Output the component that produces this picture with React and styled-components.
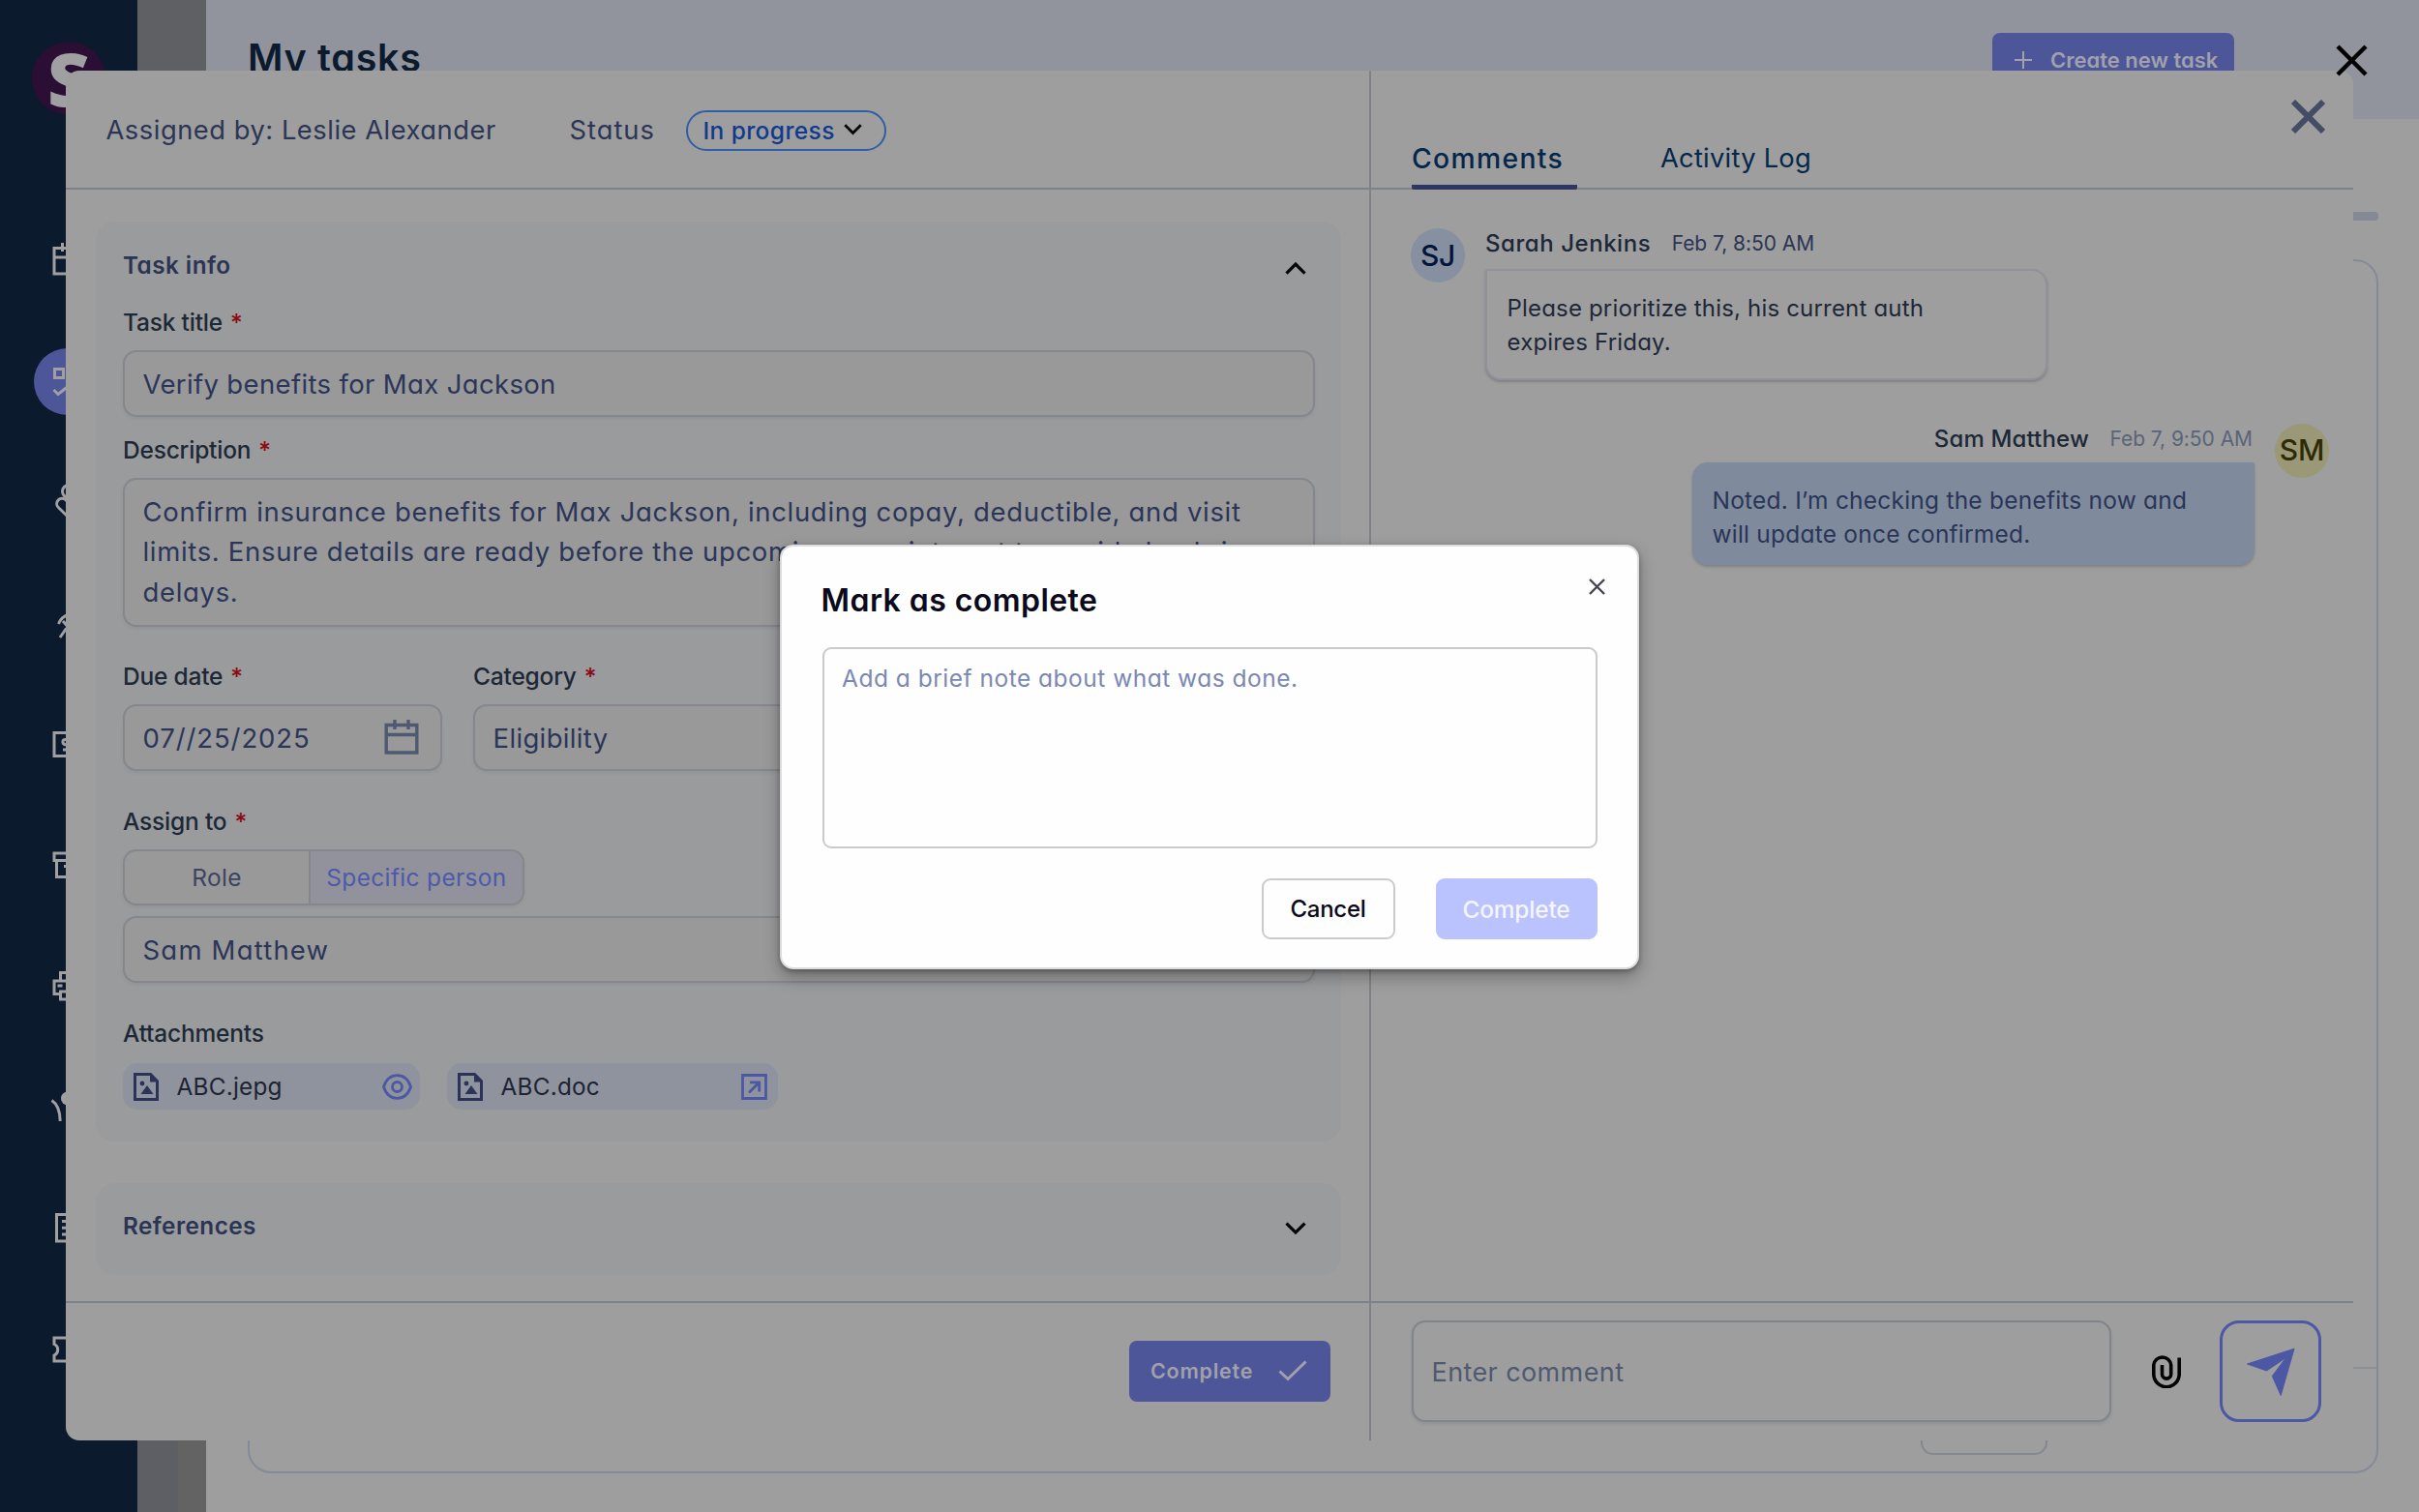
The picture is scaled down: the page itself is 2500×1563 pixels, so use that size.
import React from 'react';
import styled, { createGlobalStyle, css } from 'styled-components';

const GlobalStyle = createGlobalStyle`
  *, *::before, *::after { box-sizing: border-box; }
  html, body { margin: 0; padding: 0; }
  body {
    width: 2500px;
    height: 1563px;
    overflow: hidden;
    background: #9e9e9e;
    font-family: Inter, 'Liberation Sans', sans-serif;
  }
  button { font-family: inherit; margin: 0; padding: 0; cursor: pointer; }
  svg { display: block; flex: none; }
`;

/* Geometric text: single-storey "a", slightly open tracking. */
const geometric = css`
  font-feature-settings: 'cv11';
`;

/* ---------- page behind the panel ---------- */

const Screen = styled.div`
  position: relative;
  display: flex;
  width: 2500px;
  height: 1563px;
  overflow: hidden;
`;

const Sidebar = styled.nav`
  display: flex;
  flex-direction: column;
  align-items: center;
  width: 142px;
  background: #0b1a2c;
`;

const LogoArea = styled.div`
  height: 205.4px;
  padding-top: 43px;
`;

const Logo = styled.div`
  display: flex;
  align-items: center;
  justify-content: center;
  width: 76px;
  height: 76px;
  border-radius: 50%;
  background: #2b0e33;
  color: #a0a0a2;
  font: 800 76px/76px 'Open Sans', sans-serif;
`;

const NavSlot = styled.a`
  display: flex;
  align-items: center;
  justify-content: center;
  height: 125.2px;
  color: #a0a0a2;
`;

const NavBubble = styled.span`
  display: flex;
  align-items: center;
  justify-content: center;
  width: 69px;
  height: 69px;
  margin: ${(p) => (p.$active ? '2px 3px 0 0' : 0)};
  border-radius: 50%;
  background: ${(p) => (p.$active ? '#4d5698' : 'transparent')};
  svg { margin-left: ${(p) => (p.$active ? '3px' : 0)}; }
`;

const Gutter = styled.div`
  display: flex;
  flex-direction: column;
  width: 71px;
  background: #5f6063;
`;

const GutterFoot = styled.div`
  display: grid;
  grid-template-columns: 42px 29px;
  height: 130px;
  margin-top: auto;
`;

const GutterShade = styled.div`
  background: ${(p) => p.$tone};
`;

const Page = styled.main`
  display: flex;
  flex-direction: column;
  flex: 1;
  background: #9e9e9e;
`;

const PageHeader = styled.header`
  display: flex;
  align-items: center;
  justify-content: space-between;
  height: 123px;
  padding: 0 191px 0 43px;
  background: #91949d;
`;

const PageTitle = styled.h1`
  margin: 0 0 3px;
  color: #0b1a2c;
  font-size: 39.5px;
  font-weight: 600;
  letter-spacing: 0.7px;
  ${geometric}
`;

const CreateButton = styled.button`
  display: flex;
  align-items: center;
  gap: 19px;
  width: 250px;
  height: 56px;
  padding-left: 23px;
  border: 0;
  border-radius: 8px;
  background: #4d5698;
  color: #a1a1ac;
  font-size: 22px;
  font-weight: 600;
  white-space: nowrap;
  ${geometric}
`;

const PageBody = styled.div`
  display: flex;
  flex-direction: column;
  align-items: flex-end;
  padding: 96px 42px 0 43px;
`;

const Rail = styled.div`
  width: 160px;
  height: 9px;
  border-radius: 4px;
  background: #858994;
`;

const TableCard = styled.section`
  display: flex;
  flex-direction: column;
  justify-content: flex-end;
  width: 100%;
  height: 1255px;
  margin-top: 40px;
  border: 2px solid #858a98;
  border-radius: 24px;
`;

const Pager = styled.div`
  display: flex;
  justify-content: flex-end;
  height: 108px;
  padding: 24px 340px 0 0;
  border-top: 2px solid #8c9197;
`;

const PagerSelect = styled.div`
  width: 131px;
  height: 65px;
  border: 2px solid #84898f;
  border-radius: 13px;
`;

/* ---------- task panel ---------- */

const Panel = styled.section`
  position: absolute;
  top: 73px;
  left: 68px;
  display: grid;
  grid-template-columns: 1347px 1fr;
  width: 2364px;
  height: 1416px;
  border-radius: 14px 14px 0 14px;
  background: #9e9e9e;
  overflow: hidden;
`;

const Column = styled.div`
  display: flex;
  flex-direction: column;
  min-width: 0;
  border-left: ${(p) => (p.$divided ? '2px solid #7f8286' : 0)};
`;

const ColumnHeader = styled.header`
  display: flex;
  flex: none;
  height: 123px;
  border-bottom: 2px solid #7d8188;
`;

const TaskHeader = styled(ColumnHeader)`
  align-items: center;
  padding: 1px 0 0 41.5px;
`;

const HeaderText = styled.span`
  width: ${(p) => p.$width};
  color: #2c3556;
  font-size: 27.3px;
  letter-spacing: ${(p) => p.$track};
  white-space: nowrap;
  ${geometric}
`;

const StatusPill = styled.button`
  display: flex;
  align-items: center;
  gap: 9px;
  width: 207px;
  height: 42px;
  margin-top: 1px;
  padding-left: 16px;
  border: 2px solid #2f5da6;
  border-radius: 21px;
  background: transparent;
  color: #103a8e;
  font-size: 24.5px;
  font-weight: 500;
  letter-spacing: 0.4px;
  white-space: nowrap;
  ${geometric}
`;

const ColumnBody = styled.div`
  display: flex;
  flex: 1;
  flex-direction: column;
  gap: ${(p) => p.$gap};
  padding: ${(p) => p.$pad};
`;

const ColumnFooter = styled.footer`
  display: flex;
  flex: none;
  align-items: center;
  height: 144px;
  padding-bottom: 1px;
  border-top: 2px solid #7a828a;
`;

const TaskFooter = styled(ColumnFooter)`
  justify-content: flex-end;
  padding-right: 40px;
`;

const CompleteButton = styled.button`
  display: flex;
  align-items: center;
  justify-content: space-between;
  width: 208px;
  height: 63px;
  padding: 0 24px 2px 22px;
  border: 0;
  border-radius: 8px;
  background: #4d5698;
  color: #a1a1ac;
  font-size: 21.5px;
  font-weight: 600;
  letter-spacing: 0.75px;
  ${geometric}
`;

const Section = styled.section`
  height: ${(p) => p.$height};
  padding: ${(p) => p.$padTop} 27px 0 28px;
  border-radius: 20px;
  background: #9a9b9d;
`;

const SectionHeader = styled.div`
  display: flex;
  align-items: center;
  justify-content: space-between;
  height: 60px;
  padding-right: 9px;
  svg { margin-top: 7px; }
`;

const SectionTitle = styled.h2`
  margin: 0;
  color: #2b3453;
  font-size: 24.3px;
  font-weight: 600;
  letter-spacing: 0.45px;
  ${geometric}
`;

const FieldLabel = styled.label`
  display: flex;
  gap: 8px;
  height: 44px;
  margin-top: ${(p) => p.$top || 0};
  color: #1d2835;
  font-size: 24.5px;
  font-weight: 500;
  line-height: 30px;
  letter-spacing: -0.2px;
  white-space: nowrap;
`;

const Required = styled.span`
  color: #8c0a10;
`;

const controlBox = css`
  border: 2px solid #84878d;
  border-radius: 14px;
  background: #999999;
  box-shadow: 0 2px 3px rgba(60, 64, 72, 0.08);
  color: #2b3558;
  font-size: 27.5px;
`;

const Control = styled.div`
  display: flex;
  align-items: center;
  justify-content: space-between;
  height: ${(p) => p.$height || '69px'};
  padding: 1px 22px 0 18.5px;
  letter-spacing: ${(p) => p.$track || '0.35px'};
  white-space: nowrap;
  ${controlBox}
  ${geometric}
`;

const TextBlock = styled.p`
  height: 154px;
  margin: 0;
  padding: 12.5px 0 0 18.5px;
  line-height: 41.6px;
  letter-spacing: 0.67px;
  white-space: pre;
  ${controlBox}
  ${geometric}
`;

const FieldPair = styled.div`
  display: grid;
  grid-template-columns: 330px 1fr;
  column-gap: 32px;
`;

const Segments = styled.div`
  display: grid;
  grid-template-columns: 190px 1fr;
  width: 415px;
  height: 58px;
  margin-bottom: 11px;
  overflow: hidden;
  ${controlBox}
`;

const Segment = styled.button`
  border: 0;
  border-left: ${(p) => (p.$selected ? '2px solid #84878d' : 0)};
  background: ${(p) => (p.$selected ? '#92929d' : 'transparent')};
  color: ${(p) => (p.$selected ? '#4d5aa8' : '#3c4460')};
  font-size: 24.5px;
  letter-spacing: 0.33px;
  white-space: nowrap;
  ${geometric}
`;

const Chips = styled.div`
  display: flex;
  gap: 28px;
  margin-top: 2px;
`;

const Chip = styled.div`
  display: flex;
  align-items: center;
  width: ${(p) => p.$width};
  height: 48px;
  padding: 0 ${(p) => p.$end} 0 11px;
  border-radius: 15px;
  background: #8e939d;
  color: #4c58a4;
`;

const ChipName = styled.span`
  flex: 1;
  margin-left: 18.5px;
  color: #1d2333;
  font-size: 24.3px;
  letter-spacing: 0.25px;
  ${geometric}
`;

/* ---------- comments column ---------- */

const TabsHeader = styled(ColumnHeader)`
  align-items: flex-end;
  padding-left: 42px;
`;

const Tab = styled.button`
  width: ${(p) => p.$width};
  height: 60px;
  margin: 0 86px -2px 0;
  padding: 0 0 4px;
  border: 0;
  background: linear-gradient(#2c3863, #2c3863) bottom / 100% ${(p) => (p.$active ? '5px' : '0')} no-repeat;
  border-radius: 2px;
  color: #04274a;
  font-size: ${(p) => (p.$active ? '28.3px' : '27.3px')};
  font-weight: ${(p) => (p.$active ? 500 : 400)};
  letter-spacing: ${(p) => (p.$active ? '1.35px' : '0.25px')};
  line-height: 50px;
  text-align: left;
  white-space: nowrap;
  ${geometric}
`;

const PanelClose = styled.button`
  align-self: flex-start;
  margin: 29.5px 29px 0 auto;
  border: 0;
  background: none;
  color: #444c66;
`;

const Message = styled.article`
  display: flex;
  gap: 21px;
  flex-direction: ${(p) => (p.$own ? 'row-reverse' : 'row')};
`;

const Avatar = styled.div`
  width: 56px;
  height: 56px;
  border-radius: 50%;
  background: ${(p) => p.$bg};
  color: ${(p) => p.$fg};
  font-size: 30px;
  font-weight: 500;
  line-height: ${(p) => p.$line};
  letter-spacing: -0.2px;
  text-align: center;
`;

const MessageMeta = styled.div`
  display: flex;
  gap: 21.5px;
  justify-content: ${(p) => (p.$own ? 'flex-end' : 'flex-start')};
  height: ${(p) => (p.$own ? '40px' : '42px')};
  padding-right: 2px;
  line-height: ${(p) => (p.$own ? '31px' : '32px')};
  white-space: nowrap;
`;

const Author = styled.strong`
  color: #1c2837;
  font-size: 24px;
  font-weight: 500;
  letter-spacing: ${(p) => p.$track};
  ${geometric}
`;

const When = styled.time`
  color: ${(p) => p.$color};
  font-size: 21px;
  letter-spacing: -0.05px;
`;

const Bubble = styled.p`
  width: 581px;
  height: ${(p) => (p.$own ? '106px' : '115px')};
  margin: 0;
  padding: ${(p) => (p.$own ? '20px 18.5px' : '22px 20.5px')};
  border: 2px solid ${(p) => (p.$own ? '#7f8a9d' : '#91919b')};
  border-radius: ${(p) => (p.$own ? '16px 2px 16px 16px' : '2px 16px 16px 16px')};
  background: ${(p) => (p.$own ? '#7f8a9d' : '#9e9e9e')};
  box-shadow: 0 2px 3px rgba(50, 54, 66, 0.28);
  color: ${(p) => (p.$own ? '#293556' : '#1d2737')};
  font-size: ${(p) => (p.$own ? '24.5px' : '24px')};
  line-height: 34.8px;
  letter-spacing: ${(p) => (p.$own ? '0.22px' : '0.18px')};
  white-space: pre-line;
  ${geometric}
`;

const CommentFooter = styled(ColumnFooter)`
  padding-left: 42px;
`;

const CommentInput = styled.div`
  width: 723px;
  height: 105px;
  padding-left: 18.5px;
  border: 2px solid #7f858a;
  border-radius: 14px;
  box-shadow: 0 2px 3px rgba(60, 64, 72, 0.15);
  color: #4f5a70;
  font-size: 27px;
  line-height: 103px;
  letter-spacing: 0.4px;
`;

const AttachButton = styled.button`
  margin: 0 40px 0 42px;
  border: 0;
  background: none;
  color: #030303;
`;

const SendButton = styled.button`
  display: flex;
  align-items: center;
  justify-content: center;
  width: 105px;
  height: 105px;
  border: 3px solid #4c58a4;
  border-radius: 20px;
  background: none;
  color: #4c58a4;
`;

/* ---------- dialog ---------- */

const ScreenClose = styled.button`
  position: absolute;
  top: 46px;
  left: 2414px;
  border: 0;
  background: none;
  color: #000;
`;

const Overlay = styled.div`
  position: absolute;
  inset: 0;
  display: flex;
  align-items: center;
  justify-content: center;
  padding-top: 1px;
  pointer-events: none;
`;

const Dialog = styled.div`
  display: flex;
  flex-direction: column;
  width: 888px;
  height: 439px;
  padding: 0 41.5px 29px;
  border: 2px solid #dcdcdc;
  border-radius: 14px;
  background: #fefefe;
  box-shadow: 0 8px 18px rgba(0, 0, 0, 0.28), 0 2px 5px rgba(0, 0, 0, 0.3);
  pointer-events: auto;
`;

const DialogHeader = styled.header`
  display: flex;
  justify-content: space-between;
  height: 104px;
`;

const DialogTitle = styled.h2`
  margin: 36.5px 0 0 -1px;
  color: #0a0a1a;
  font-size: 32px;
  font-weight: 600;
  line-height: 40px;
  letter-spacing: 0.45px;
  ${geometric}
`;

const DialogClose = styled.button`
  align-self: flex-start;
  margin: 32px -9.5px 0 0;
  border: 0;
  background: none;
  color: #45454f;
`;

const NoteField = styled.div`
  height: 208px;
  padding: 13px 18.5px;
  border: 2px solid #cacacc;
  border-radius: 9px;
  color: #7b88b2;
  font-size: 24.5px;
  line-height: 34px;
  letter-spacing: 0.5px;
  ${geometric}
`;

const DialogActions = styled.footer`
  display: flex;
  gap: 42px;
  justify-content: flex-end;
  margin-top: auto;
`;

const DialogButton = styled.button`
  width: ${(p) => (p.$primary ? '167px' : '138px')};
  height: 63px;
  padding-top: 1px;
  border: 2px solid ${(p) => (p.$primary ? '#bac3fd' : '#cbcbcd')};
  border-radius: 9px;
  background: ${(p) => (p.$primary ? '#bac3fd' : '#fefefe')};
  color: ${(p) => (p.$primary ? '#f4f5ff' : '#0a0a1a')};
  font-size: ${(p) => (p.$primary ? '24.5px' : '24px')};
  font-weight: 500;
  letter-spacing: ${(p) => (p.$primary ? '-0.2px' : '-0.25px')};
`;

/* ---------- icons ---------- */

const NavGlyph = ({ children }) => (
  <svg width="38" height="38" viewBox="0 0 38 38" fill="none" stroke="currentColor" strokeWidth="3">
    {children}
  </svg>
);

const navGlyphs = [
  <><path d="M4 7.5h30v26.5H4zM4 17h30M12.5 2v9M25.5 2v9" /></>,
  <><path d="M4.5 6.5h9v9h-9zM3.5 28l4.5 4.5 9-7M22 11h13M22 29h13" /></>,
  <><circle cx="19" cy="9" r="6.5" /><path d="M19 36L8.300 25.500a5.400 5.400 0 0 1 7.600-7.700L19 21l3.100-3.200a5.400 5.400 0 0 1 7.600 7.700z" /></>,
  <><path d="M8.500 20q3-7.500 10-9.500l6 6 6 1M10 34l6.500-9.500M13 17l7 8-2 10" /><circle cx="24" cy="5" r="3" /></>,
  <><path d="M4 7.500h30v24H4zM25 14.500h-9.500a2.600 2.600 0 0 0 0 5.200h7a2.600 2.600 0 0 1 0 5.200H13M19 11v17" /></>,
  <><path d="M4 7h30v7.500H4zM6.500 14.500v17h25v-17M14 20.500h10" /></>,
  <><path d="M10.500 27.500H4V14h30v13.500h-6.500M10.500 14V5.500h17V14M10.500 25h17v8h-17zM7.500 19h5" /></>,
  <><circle cx="18" cy="10.500" r="7" fill="currentColor" stroke="none" /><path d="M1.500 12.500Q10 18 10.200 34M36.500 12.500Q28 18 27.800 34" /></>,
  <><path d="M6.500 5.500h25v27.500h-25zM12 12.500h14M12 19.200h14M12 26h14" /></>,
  <><path d="M4 7h30v6.500a6.300 6.300 0 0 0 0 11.500v6H4v-6a6.300 6.300 0 0 0 0-11.500z" /></>,
];

const Cross = ({ size, weight }) => (
  <svg width={size} height={size} viewBox={`0 0 ${size} ${size}`} stroke="currentColor" strokeWidth={weight}>
    <path d={`M2 2L${size - 2} ${size - 2}M${size - 2} 2L2 ${size - 2}`} />
  </svg>
);

const Chevron = ({ width, up }) => (
  <svg width={width} height={width * 0.64} viewBox="0 0 22 14" fill="none" stroke="#060606" strokeWidth="3.2">
    <path d={up ? 'M1.500 12.500L11 3l9.500 9.500' : 'M1.500 1.500L11 11l9.500-9.500'} />
  </svg>
);

const PlusIcon = () => (
  <svg width="18" height="18" viewBox="0 0 18 18" stroke="currentColor" strokeWidth="2">
    <path d="M9 0v18M0 9h18" />
  </svg>
);

const CheckIcon = () => (
  <svg width="30" height="22" viewBox="0 0 30 22" fill="none" stroke="currentColor" strokeWidth="3">
    <path d="M1.500 11.500l8.500 8L28.500 1.500" />
  </svg>
);

const CalendarIcon = () => (
  <svg width="36" height="38" viewBox="0 0 36 38" fill="none" stroke="#4d5a72" strokeWidth="3.400">
    <path d="M2.200 5.500h31.600v28.500H2.200zM2.200 15.500h31.600M11 0v10M25 0v10" />
  </svg>
);

const FileImageIcon = () => (
  <svg width="26" height="29" viewBox="0 0 26 29" fill="none" stroke="#2b3458" strokeWidth="3">
    <path d="M1.500 1.500h16L24.500 8.500v19h-23z" />
    <path d="M17 1l8.500 8.500H17z" fill="#2b3458" stroke="none" />
    <circle cx="9" cy="11" r="2.400" fill="#2b3458" stroke="none" />
    <path d="M7.500 22l6.500-9 6.500 9z" fill="#2b3458" stroke="none" />
  </svg>
);

const EyeIcon = () => (
  <svg width="31" height="27" viewBox="0 0 31 27" fill="none" stroke="currentColor" strokeWidth="2.800">
    <path d="M1.500 13.500C4 6 9 1.700 15.500 1.700S27 6 29.500 13.500C27 21 22 25.300 15.500 25.300S4 21 1.500 13.500z" />
    <circle cx="15.500" cy="13.500" r="5" />
  </svg>
);

const OpenIcon = () => (
  <svg width="27" height="27" viewBox="0 0 27 27" fill="none" stroke="currentColor" strokeWidth="2.800">
    <path d="M1.500 1.500h24v24h-24zM8 19.500L18.500 9M9 8.800h9.700v9.700" />
  </svg>
);

const ClipIcon = () => (
  <svg width="30" height="35" viewBox="0 0 30 35" fill="none" stroke="currentColor" strokeWidth="3.600">
    <path d="M10.500 11v9.500a4.600 4.600 0 0 0 9.200 0V11a9 9 0 0 0-17.900 0v9.500a13.200 13.200 0 0 0 26.400 0V3.500" />
  </svg>
);

const SendIcon = () => (
  <svg width="50" height="50" viewBox="0 0 50 50" fill="currentColor">
    <path d="M0.500 17L49 1.200 35.200 49.500 26.300 29.500 40.500 10.500 20.500 24z" stroke="currentColor" strokeWidth="1" strokeLinejoin="round" />
  </svg>
);

/* ---------- composition ---------- */

const Label = ({ children, required = true, top }) => (
  <FieldLabel $top={top}>
    {children}
    {required && <Required>*</Required>}
  </FieldLabel>
);

const Comment = ({ own, initials, bg, fg, name, track, when, whenColor, text }) => (
  <Message $own={own}>
    <Avatar $bg={bg} $fg={fg} $line={own ? '55px' : '56px'}>{initials}</Avatar>
    <div>
      <MessageMeta $own={own}>
        <Author $track={track}>{name}</Author>
        <When $color={whenColor}>{when}</When>
      </MessageMeta>
      <Bubble $own={own}>{text}</Bubble>
    </div>
  </Message>
);

const TaskColumn = () => (
  <Column>
    <TaskHeader>
      <HeaderText $width="479px" $track="0.53px">Assigned by: Leslie Alexander</HeaderText>
      <HeaderText $width="120px" $track="1px">Status</HeaderText>
      <StatusPill>
        In progress
        <Chevron width={19} />
      </StatusPill>
    </TaskHeader>
    <ColumnBody $gap="43px" $pad="33px 29px 0 31px">
      <Section $height="951px" $padTop="15px">
        <SectionHeader>
          <SectionTitle>Task info</SectionTitle>
          <Chevron width={22} up />
        </SectionHeader>
        <Label top="14px">Task title</Label>
        <Control>Verify benefits for Max Jackson</Control>
        <Label top="19px">Description</Label>
        <TextBlock>
          {'Confirm insurance benefits for Max Jackson, including copay, deductible, and visit\nlimits. Ensure details are ready before the upcoming appointment to avoid check-in\ndelays.'}
        </TextBlock>
        <FieldPair>
          <div>
            <Label top="36px">Due date</Label>
            <Control $track="0.9px">
              07//25/2025
              <CalendarIcon />
            </Control>
          </div>
          <div>
            <Label top="36px">Category</Label>
            <Control>Eligibility</Control>
          </div>
        </FieldPair>
        <Label top="36.5px">Assign to</Label>
        <Segments>
          <Segment>Role</Segment>
          <Segment $selected>Specific person</Segment>
        </Segments>
        <Control $track="1.2px">Sam Matthew</Control>
        <Label top="37.500px" required={false}>Attachments</Label>
        <Chips>
          <Chip $width="307px" $end="8.500px">
            <FileImageIcon />
            <ChipName>ABC.jepg</ChipName>
            <EyeIcon />
          </Chip>
          <Chip $width="342px" $end="11px">
            <FileImageIcon />
            <ChipName>ABC.doc</ChipName>
            <OpenIcon />
          </Chip>
        </Chips>
      </Section>
      <Section $height="95px" $padTop="14px">
        <SectionHeader>
          <SectionTitle>References</SectionTitle>
          <Chevron width={22} />
        </SectionHeader>
      </Section>
    </ColumnBody>
    <TaskFooter>
      <CompleteButton>
        Complete
        <CheckIcon />
      </CompleteButton>
    </TaskFooter>
  </Column>
);

const CommentsColumn = () => (
  <Column $divided>
    <TabsHeader>
      <Tab $active $width="171px">Comments</Tab>
      <Tab $width="160px">Activity Log</Tab>
      <PanelClose aria-label="Close panel">
        <Cross size={35} weight={6} />
      </PanelClose>
    </TabsHeader>
    <ColumnBody $gap="45px" $pad="40px 25px 0 41px">
      <Comment
        initials="SJ"
        bg="#8690a0"
        fg="#04153a"
        name="Sarah Jenkins"
        track="0.55px"
        when="Feb 7, 8:50 AM"
        whenColor="#2b3553"
        text={'Please prioritize this, his current auth\nexpires Friday.'}
      />
      <Comment
        own
        initials="SM"
        bg="#9a9877"
        fg="#2e2a05"
        name="Sam Matthew"
        track="0.15px"
        when="Feb 7, 9:50 AM"
        whenColor="#5a6478"
        text={'Noted. I’m checking the benefits now and\nwill update once confirmed.'}
      />
    </ColumnBody>
    <CommentFooter>
      <CommentInput>Enter comment</CommentInput>
      <AttachButton aria-label="Attach file">
        <ClipIcon />
      </AttachButton>
      <SendButton aria-label="Send">
        <SendIcon />
      </SendButton>
    </CommentFooter>
  </Column>
);

export default function App() {
  return (
    <>
      <GlobalStyle />
      <Screen>
        <Sidebar>
          <LogoArea>
            <Logo>S</Logo>
          </LogoArea>
          {navGlyphs.map((glyph, i) => (
            <NavSlot key={i}>
              <NavBubble $active={i === 1}>
                <NavGlyph>{glyph}</NavGlyph>
              </NavBubble>
            </NavSlot>
          ))}
        </Sidebar>
        <Gutter>
          <GutterFoot>
            <GutterShade $tone="#5d5f65" />
            <GutterShade $tone="#636363" />
          </GutterFoot>
        </Gutter>
        <Page>
          <PageHeader>
            <PageTitle>My tasks</PageTitle>
            <CreateButton>
              <PlusIcon />
              Create new task
            </CreateButton>
          </PageHeader>
          <PageBody>
            <Rail />
            <TableCard>
              <Pager>
                <PagerSelect />
              </Pager>
            </TableCard>
          </PageBody>
        </Page>
        <Panel>
          <TaskColumn />
          <CommentsColumn />
        </Panel>
        <ScreenClose aria-label="Close">
          <Cross size={33} weight={4.5} />
        </ScreenClose>
        <Overlay>
          <Dialog role="dialog">
            <DialogHeader>
              <DialogTitle>Mark as complete</DialogTitle>
              <DialogClose aria-label="Close dialog">
                <Cross size={19} weight={2.4} />
              </DialogClose>
            </DialogHeader>
            <NoteField>Add a brief note about what was done.</NoteField>
            <DialogActions>
              <DialogButton>Cancel</DialogButton>
              <DialogButton $primary>Complete</DialogButton>
            </DialogActions>
          </Dialog>
        </Overlay>
      </Screen>
    </>
  );
}
